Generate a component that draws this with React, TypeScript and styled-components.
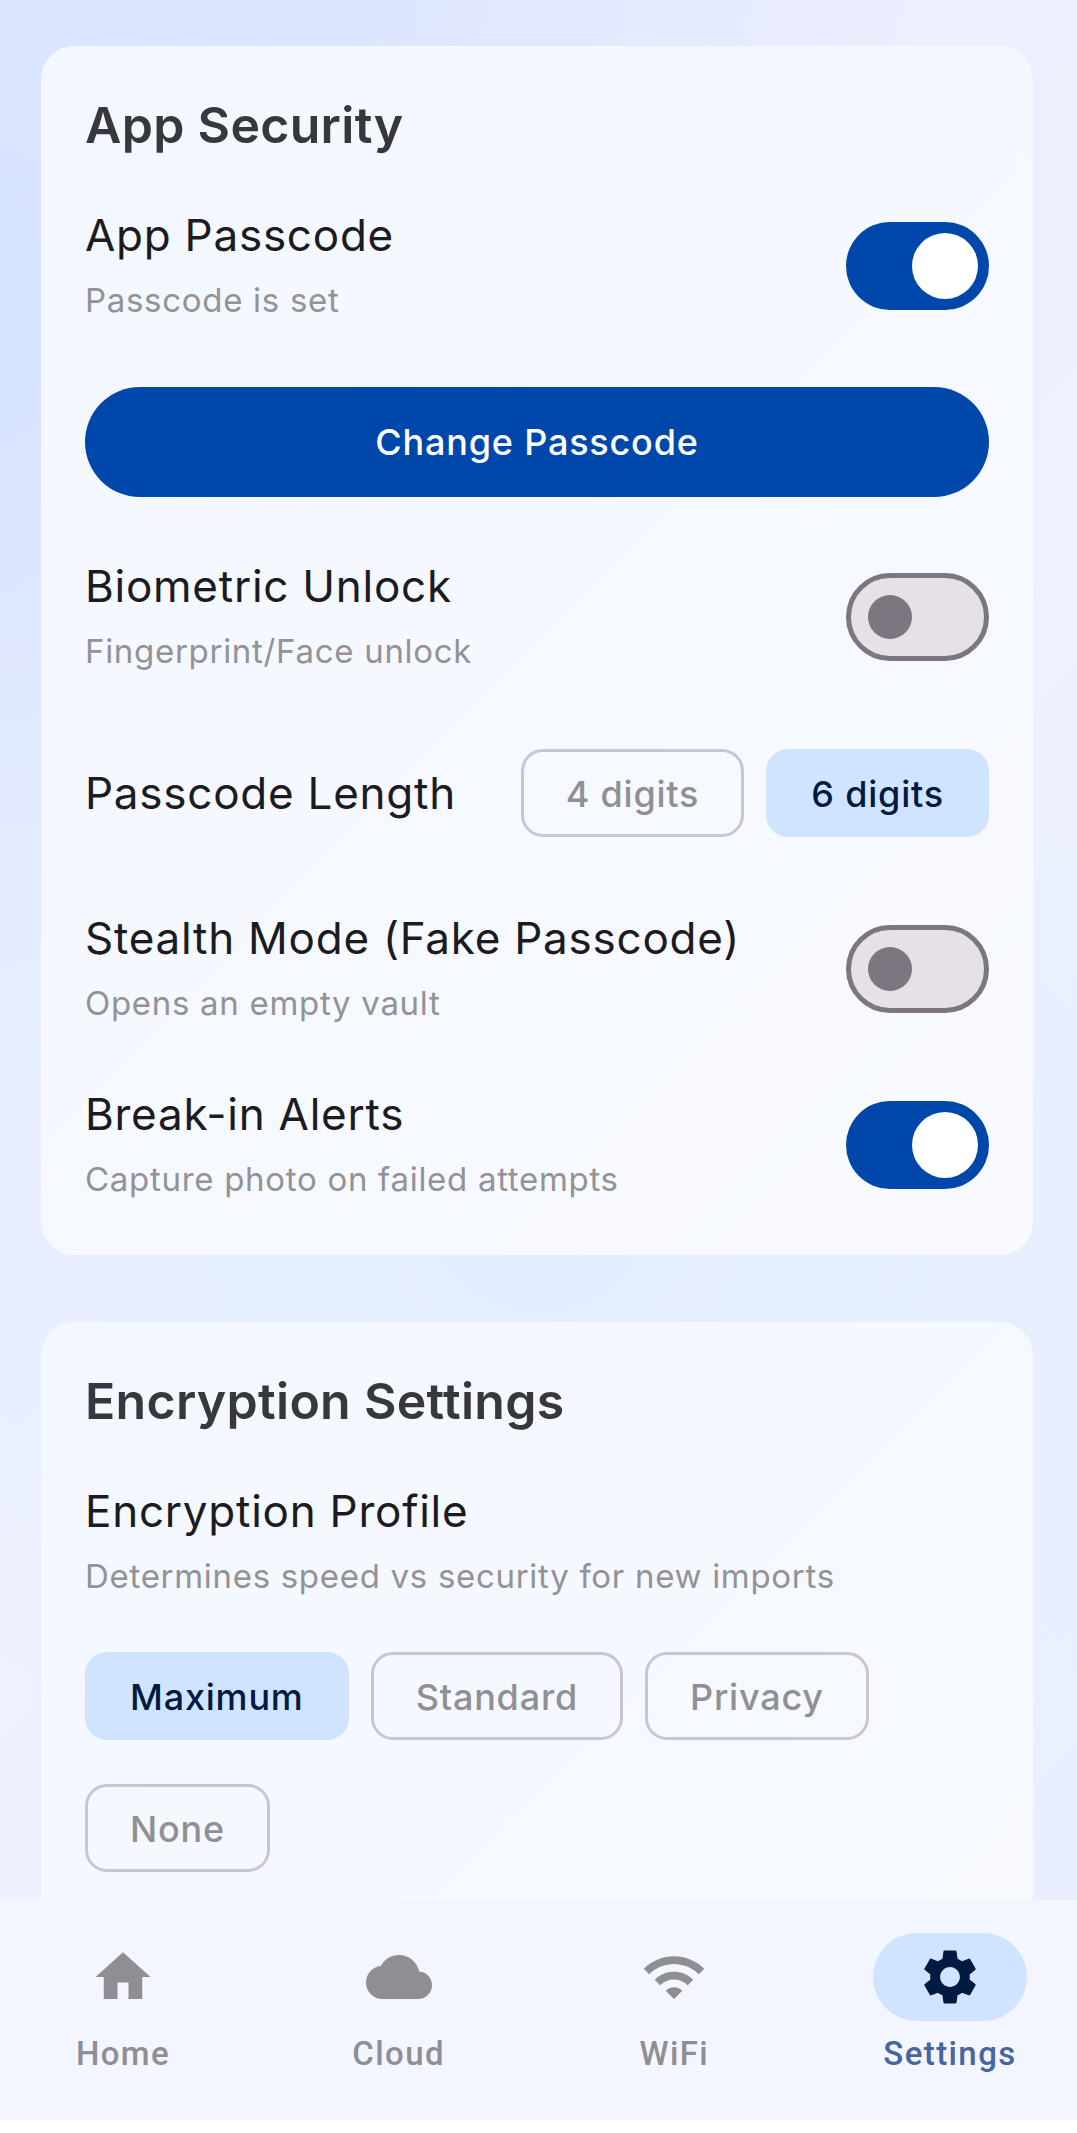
import React from 'react';
import styled, { createGlobalStyle } from 'styled-components';

const GlobalStyle = createGlobalStyle`
  html, body {
    margin: 0;
    padding: 0;
    background: #fff;
  }
  * {
    box-sizing: border-box;
  }
`;

const Screen = styled.div`
  position: relative;
  width: 1077px;
  height: 2133px;
  overflow: hidden;
  padding: 46px 44px 0 41px;
  font-family: Inter, "Noto Sans", sans-serif;
  background:
    radial-gradient(500px 800px at 0% 15%, #d5e3ff 0%, rgba(213, 227, 255, 0) 100%),
    radial-gradient(800px 600px at 50% 58%, #e1edff 0%, rgba(225, 237, 255, 0) 100%),
    radial-gradient(600px 400px at 30% 0%, #dde5ff 0%, rgba(221, 229, 255, 0) 100%),
    linear-gradient(135deg, #eaecff 0%, #eef1ff 50%, #e8efff 100%);
`;

const Card = styled.section<{ $clipped?: boolean }>`
  background: linear-gradient(135deg, #f3f7ff 0%, #f8faff 100%);
  border-radius: 33px;
  padding: 44px 44px ${({ $clipped }) => ($clipped ? 400 : 50)}px;
  margin-bottom: 67px;
`;

const CardTitle = styled.h2`
  margin: 0 0 45px;
  font-size: 50px;
  line-height: 70px;
  font-weight: 600;
  color: #38383c;
  letter-spacing: 0.3px;
`;

const Row = styled.div<{ $gap?: number }>`
  display: flex;
  align-items: center;
  justify-content: space-between;
  margin-bottom: ${({ $gap }) => $gap ?? 0}px;
`;

const RowText = styled.div`
  display: flex;
  flex-direction: column;
  padding-bottom: 4px;
`;

const Label = styled.span`
  font-size: 44px;
  line-height: 60px;
  letter-spacing: 0.75px;
  color: #1b1b20;
`;

const Hint = styled.span`
  font-size: 33px;
  line-height: 44px;
  letter-spacing: 0.7px;
  margin-top: 13px;
  color: #929297;
`;

const Toggle = styled.span<{ $on?: boolean }>`
  position: relative;
  flex: none;
  width: 143px;
  height: 88px;
  border-radius: 44px;
  background: ${({ $on }) => ($on ? '#0047ab' : '#e5e1e7')};
  border: ${({ $on }) => ($on ? 'none' : '5.5px solid #7b7680')};
`;

const Knob = styled.span<{ $on?: boolean }>`
  position: absolute;
  top: 50%;
  transform: translateY(-50%);
  border-radius: 50%;
  width: ${({ $on }) => ($on ? 66 : 44)}px;
  height: ${({ $on }) => ($on ? 66 : 44)}px;
  background: ${({ $on }) => ($on ? '#fff' : '#7b7680')};
  ${({ $on }) => ($on ? 'right: 11px;' : 'left: 16.5px;')}
`;

const PrimaryButton = styled.button`
  display: block;
  width: 100%;
  height: 110px;
  border: none;
  border-radius: 55px;
  background: #0047ab;
  color: #fff;
  font: 500 36px Inter, sans-serif;
  letter-spacing: 0.8px;
  margin-bottom: 59px;
`;

const ChipRow = styled.div`
  display: flex;
  flex-wrap: wrap;
  gap: 44px 22px;
`;

const Chip = styled.span<{ $active?: boolean }>`
  display: inline-flex;
  align-items: center;
  justify-content: center;
  height: 88px;
  padding: 2px 42px 0;
  border-radius: 22px;
  font-size: 36px;
  font-weight: 500;
  letter-spacing: 0.8px;
  color: ${({ $active }) => ($active ? '#001a41' : '#8f8f94')};
  background: ${({ $active }) => ($active ? '#d0e3ff' : 'transparent')};
  border: 3px solid ${({ $active }) => ($active ? 'transparent' : '#c9c5d1')};
`;

const NavBar = styled.nav`
  position: absolute;
  left: 0;
  right: 0;
  bottom: 0;
  height: 233px;
  display: flex;
  justify-content: space-between;
  padding: 33px 50px 0 46px;
  background: #f3f6ff;
  border-bottom: 13px solid #fff;
`;

const NavItem = styled.div`
  display: flex;
  flex-direction: column;
  align-items: center;
  width: 154px;
`;

const NavIcon = styled.span<{ $active?: boolean }>`
  display: flex;
  align-items: center;
  justify-content: center;
  width: 154px;
  height: 88px;
  border-radius: 44px;
  background: ${({ $active }) => ($active ? '#d0e3ff' : 'transparent')};
  color: ${({ $active }) => ($active ? '#001a41' : '#8e8e93')};
`;

const NavLabel = styled.span<{ $active?: boolean }>`
  margin-top: 11px;
  font-family: Roboto, sans-serif;
  font-size: 33px;
  line-height: 44px;
  font-weight: 500;
  letter-spacing: 1.4px;
  color: ${({ $active }) => ($active ? '#47659f' : '#8e8e93')};
`;

const Icon = styled.svg`
  flex: none;
  width: 66px;
  height: 66px;
  fill: currentColor;
`;

const App: React.FC = () => {
  return (
    <Screen>
      <GlobalStyle />
      <Card>
        <CardTitle>App Security</CardTitle>
        <Row $gap={61}>
          <RowText>
            <Label>App Passcode</Label>
            <Hint>Passcode is set</Hint>
          </RowText>
          <Toggle $on><Knob $on /></Toggle>
        </Row>
        <PrimaryButton>Change Passcode</PrimaryButton>
        <Row $gap={72}>
          <RowText>
            <Label>Biometric Unlock</Label>
            <Hint>Fingerprint/Face unlock</Hint>
          </RowText>
          <Toggle><Knob /></Toggle>
        </Row>
        <Row $gap={71}>
          <Label>Passcode Length</Label>
          <ChipRow>
            <Chip>4 digits</Chip>
            <Chip $active>6 digits</Chip>
          </ChipRow>
        </Row>
        <Row $gap={55}>
          <RowText>
            <Label>Stealth Mode (Fake Passcode)</Label>
            <Hint>Opens an empty vault</Hint>
          </RowText>
          <Toggle><Knob /></Toggle>
        </Row>
        <Row>
          <RowText>
            <Label>Break-in Alerts</Label>
            <Hint>Capture photo on failed attempts</Hint>
          </RowText>
          <Toggle $on><Knob $on /></Toggle>
        </Row>
      </Card>
      <Card $clipped>
        <CardTitle>Encryption Settings</CardTitle>
        <Row $gap={50}>
          <RowText>
            <Label>Encryption Profile</Label>
            <Hint>Determines speed vs security for new imports</Hint>
          </RowText>
        </Row>
        <ChipRow>
          <Chip $active>Maximum</Chip>
          <Chip>Standard</Chip>
          <Chip>Privacy</Chip>
          <Chip>None</Chip>
        </ChipRow>
      </Card>
      <NavBar>
        <NavItem>
          <NavIcon>
            <Icon viewBox="0 0 24 24"><path d="M10 20v-6h4v6h5v-8h3L12 3 2 12h3v8z" /></Icon>
          </NavIcon>
          <NavLabel>Home</NavLabel>
        </NavItem>
        <NavItem>
          <NavIcon>
            <Icon viewBox="0 0 24 24"><path d="M19.35 10.04C18.67 6.59 15.64 4 12 4 9.11 4 6.6 5.64 5.35 8.04 2.34 8.36 0 10.91 0 14c0 3.31 2.69 6 6 6h13c2.76 0 5-2.24 5-5 0-2.64-2.05-4.78-4.65-4.96z" /></Icon>
          </NavIcon>
          <NavLabel>Cloud</NavLabel>
        </NavItem>
        <NavItem>
          <NavIcon>
            <Icon viewBox="0 0 24 24"><path d="M1 9l2 2c4.97-4.97 13.03-4.97 18 0l2-2C16.93 2.93 7.08 2.93 1 9zm8 8l3 3 3-3c-1.65-1.66-4.34-1.66-6 0zm-4-4l2 2c2.76-2.76 7.24-2.76 10 0l2-2C15.14 9.14 8.87 9.14 5 13z" /></Icon>
          </NavIcon>
          <NavLabel>WiFi</NavLabel>
        </NavItem>
        <NavItem>
          <NavIcon $active>
            <Icon viewBox="0 0 24 24"><path d="M19.14 12.94c.04-.3.06-.61.06-.94 0-.32-.02-.64-.07-.94l2.03-1.58c.18-.14.23-.41.12-.61l-1.92-3.32c-.12-.22-.37-.29-.59-.22l-2.39.96c-.5-.38-1.03-.7-1.62-.94l-.36-2.54c-.04-.24-.24-.41-.48-.41h-3.84c-.24 0-.43.17-.47.41l-.36 2.54c-.59.24-1.13.57-1.62.94l-2.39-.96c-.22-.08-.47 0-.59.22L2.74 8.87c-.12.21-.08.47.12.61l2.03 1.58c-.05.3-.09.63-.09.94s.02.64.07.94l-2.03 1.58c-.18.14-.23.41-.12.61l1.92 3.32c.12.22.37.29.59.22l2.39-.96c.5.38 1.03.7 1.62.94l.36 2.54c.05.24.24.41.48.41h3.84c.24 0 .44-.17.47-.41l.36-2.54c.59-.24 1.13-.56 1.62-.94l2.39.96c.22.08.47 0 .59-.22l1.92-3.32c.12-.22.07-.47-.12-.61l-2.01-1.58zM12 15.6c-1.98 0-3.6-1.62-3.6-3.6s1.62-3.6 3.6-3.6 3.6 1.62 3.6 3.6-1.62 3.6-3.6 3.6z" /></Icon>
          </NavIcon>
          <NavLabel $active>Settings</NavLabel>
        </NavItem>
      </NavBar>
    </Screen>
  );
};

export default App;
